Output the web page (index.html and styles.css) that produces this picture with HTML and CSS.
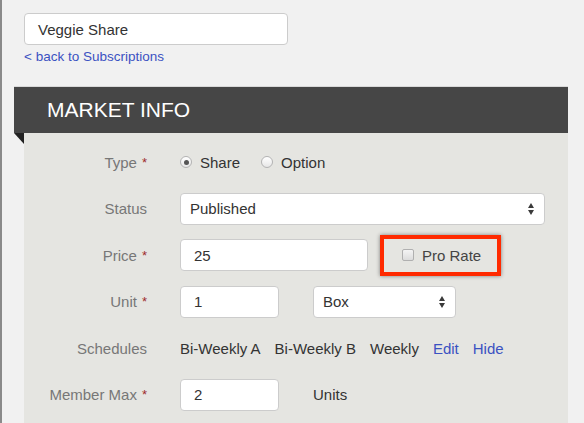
FILE: index.html
```html
<!DOCTYPE html>
<html>
<head>
<meta charset="utf-8">
<link rel="stylesheet" href="styles.css">
</head>
<body>
<div class="page">
  <div class="top">
    <div class="field title-field">Veggie Share</div>
    <a class="back" href="#">&lt; back to Subscriptions</a>
  </div>
  <div class="panel">
    <div class="panel-head">MARKET INFO</div>
    <div class="panel-body">
      <div class="row">
        <div class="label">Type<span class="req">*</span></div>
        <div class="controls">
          <span class="radio checked"></span><span class="opt">Share</span>
          <span class="radio second"></span><span class="opt">Option</span>
        </div>
      </div>
      <div class="row">
        <div class="label">Status</div>
        <div class="controls">
          <div class="field select status-select">Published<span class="arrows"><i class="up"></i><i class="down"></i></span></div>
        </div>
      </div>
      <div class="row">
        <div class="label">Price<span class="req">*</span></div>
        <div class="controls">
          <div class="field price-field">25</div>
          <div class="prorate"><span class="checkbox"></span><span>Pro Rate</span></div>
        </div>
      </div>
      <div class="row">
        <div class="label">Unit<span class="req">*</span></div>
        <div class="controls">
          <div class="field small-field">1</div>
          <div class="field select unit-select">Box<span class="arrows"><i class="up"></i><i class="down"></i></span></div>
        </div>
      </div>
      <div class="row">
        <div class="label">Schedules</div>
        <div class="controls schedules">
          <span>Bi-Weekly A</span>
          <span>Bi-Weekly B</span>
          <span>Weekly</span>
          <a href="#" class="link">Edit</a>
          <a href="#" class="link">Hide</a>
        </div>
      </div>
      <div class="row">
        <div class="label">Member Max<span class="req">*</span></div>
        <div class="controls">
          <div class="field small-field">2</div>
          <span class="units">Units</span>
        </div>
      </div>
    </div>
  </div>
</div>
</body>
</html>
```

FILE: styles.css
```css
html, body {
  margin: 0;
  padding: 0;
  background: #f1f1f1;
  font-family: "Liberation Sans", Arial, sans-serif;
  overflow: hidden;
}

.page {
  border-left: 2px solid #8a8a8a;
  height: 423px;
  box-sizing: border-box;
  padding-top: 13px;
}

.top {
  padding-left: 22px;
}

.field {
  box-sizing: border-box;
  height: 32px;
  border: 1px solid #cccccc;
  border-radius: 4px;
  background: #ffffff;
  font-size: 15px;
  color: #333333;
  padding-left: 13px;
  display: flex;
  align-items: center;
}

.title-field {
  width: 264px;
}

.back {
  display: block;
  margin-top: 4px;
  font-size: 13.5px;
  line-height: 16px;
  color: #3b52c2;
  text-decoration: none;
}

.panel {
  margin-top: 21px;
  margin-left: 12px;
  width: 554px;
}

.panel-head {
  box-sizing: border-box;
  height: 47px;
  background: #464646;
  border-top: 1px solid #d9d9d9;
  color: #ffffff;
  font-size: 21px;
  padding-left: 33px;
  display: flex;
  align-items: center;
}

.panel-body {
  position: relative;
  margin-left: 10px;
  background: #e5e5e1;
  padding-top: 13px;
  height: 300px;
  box-sizing: border-box;
}

.panel-body::before {
  content: "";
  position: absolute;
  left: -10px;
  top: 0;
  width: 0;
  height: 0;
  border-top: 11px solid #222222;
  border-left: 10px solid transparent;
}

.row {
  display: flex;
  align-items: center;
  height: 32px;
}

.row + .row {
  margin-top: 14.5px;
}

.label {
  width: 123px;
  text-align: right;
  font-size: 15px;
  color: #777777;
  flex: none;
}

.req {
  color: #9e2b2b;
  font-size: 13px;
  margin-left: 5px;
  position: relative;
  top: -1px;
}

.controls {
  margin-left: 33px;
  display: flex;
  align-items: center;
  font-size: 15px;
  color: #333333;
}

.radio {
  box-sizing: border-box;
  width: 12px;
  height: 12px;
  border-radius: 50%;
  border: 1px solid #b3b3b3;
  background: linear-gradient(#ffffff, #e6e6e6);
  display: inline-flex;
  align-items: center;
  justify-content: center;
  flex: none;
}

.radio.checked::after {
  content: "";
  width: 5px;
  height: 5px;
  border-radius: 50%;
  background: #555555;
}

.radio.second {
  margin-left: 21px;
}

.opt {
  margin-left: 8px;
}

.select {
  position: relative;
  padding-left: 9px;
}

.status-select {
  width: 365px;
}

.unit-select {
  width: 143px;
  margin-left: 34px;
}

.arrows {
  position: absolute;
  right: 10px;
  top: 50%;
  transform: translateY(-50%);
  display: flex;
  flex-direction: column;
  gap: 2px;
}

.arrows i {
  display: block;
  width: 0;
  height: 0;
  border-left: 3.5px solid transparent;
  border-right: 3.5px solid transparent;
}

.arrows .up {
  border-bottom: 5px solid #3a3a3a;
}

.arrows .down {
  border-top: 5px solid #3a3a3a;
}

.price-field {
  width: 188px;
}

.prorate {
  box-sizing: border-box;
  margin-left: 12px;
  width: 121px;
  height: 41px;
  border: 4px solid #ff2a00;
  box-shadow: 0 0 4px rgba(0, 0, 0, 0.45);
  display: flex;
  align-items: center;
  padding-left: 18px;
  color: #444444;
}

.checkbox {
  box-sizing: border-box;
  width: 12px;
  height: 12px;
  border: 1px solid #b0b0b0;
  border-radius: 2px;
  background: linear-gradient(#f4f4f4, #dcdcdc);
  margin-right: 8px;
  flex: none;
}

.small-field {
  width: 99px;
}

.schedules {
  gap: 14px;
}

.link {
  color: #3b52c2;
  text-decoration: none;
}

.units {
  margin-left: 34px;
}
```
